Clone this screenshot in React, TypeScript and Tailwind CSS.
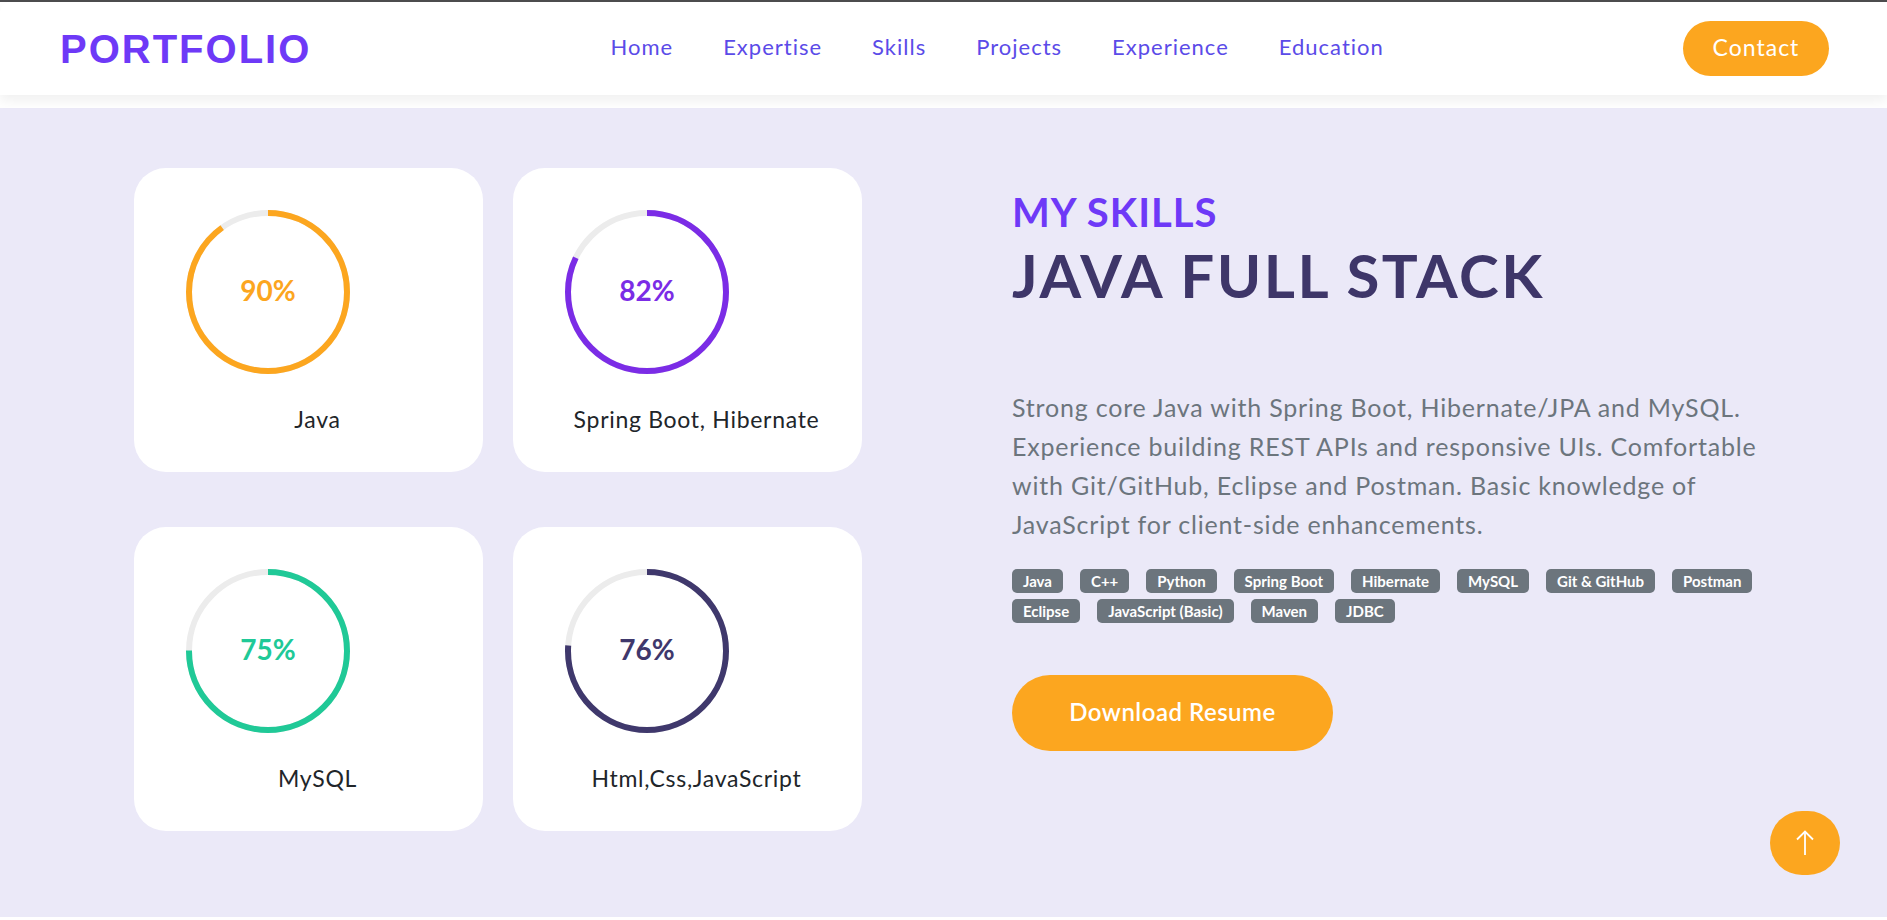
const skills = [
  { label: "Java", value: 90, color: "#fca61f" },
  { label: "Spring Boot, Hibernate", value: 82, color: "#7b2ce6" },
  { label: "MySQL", value: 75, color: "#20c997" },
  { label: "Html,Css,JavaScript", value: 76, color: "#3f386c" },
];

const tags = [
  "Java",
  "C++",
  "Python",
  "Spring Boot",
  "Hibernate",
  "MySQL",
  "Git & GitHub",
  "Postman",
  "Eclipse",
  "JavaScript (Basic)",
  "Maven",
  "JDBC",
];

const links = ["Home", "Expertise", "Skills", "Projects", "Experience", "Education"];

function Ring({ value, color }: { value: number; color: string }) {
  const r = 79;
  const c = 2 * Math.PI * r;
  return (
    <div className="relative h-[164px] w-[164px]">
      <svg width="164" height="164" viewBox="0 0 164 164" className="-rotate-90">
        <circle cx="82" cy="82" r={r} fill="none" stroke="#ececec" strokeWidth="6" />
        <circle
          cx="82"
          cy="82"
          r={r}
          fill="none"
          stroke={color}
          strokeWidth="6"
          strokeDasharray={c}
          strokeDashoffset={c * (1 - value / 100)}
        />
      </svg>
      <div className="absolute inset-0 flex items-center justify-center pb-[4px]">
        <span className="text-[28px] font-bold leading-none" style={{ color }}>
          {value}%
        </span>
      </div>
    </div>
  );
}

export default function App() {
  return (
    <div className="relative min-h-[920px] w-full bg-white font-['Lato',sans-serif]">
      <div className="h-[2px] bg-[#4d4d4f]" />
      <header className="relative z-10 flex h-[93px] items-center justify-between rounded-tl-[10px] bg-white pl-[60px] pr-[58px] shadow-[0_6px_12px_rgba(0,0,0,0.06)]">
        <div className="font-['Liberation_Sans',sans-serif] text-[40px] font-bold leading-none tracking-[2px] text-[#6e39f7]">
          PORTFOLIO
        </div>
        <nav className="flex items-center gap-[50px] pb-[4px]">
          {links.map((l) => (
            <a key={l} className="text-[22px] tracking-[1px] text-[#5b4be8]">
              {l}
            </a>
          ))}
        </nav>
        <button className="h-[55px] w-[146px] rounded-full bg-[#fca61f] pb-[2px] text-[23px] tracking-[1px] text-white">
          Contact
        </button>
      </header>

      <main className="mt-[13px] flex h-[809px] bg-[#ebe9f8] pl-[134px] pt-[60px]">
        <div className="grid grid-cols-[349px_349px] gap-x-[30px] gap-y-[55px] self-start">
          {skills.map((s) => (
            <div key={s.label} className="flex h-[304px] flex-col rounded-[32px] bg-white pt-[42px]">
              <div className="pl-[52px]">
                <Ring value={s.value} color={s.color} />
              </div>
              <div className="mt-[28px] pl-[18px] text-center text-[23px] tracking-[0.7px] text-[#212529]">
                {s.label}
              </div>
            </div>
          ))}
        </div>

        <div className="ml-[150px] w-[790px] pt-[20px]">
          <div className="text-[40px] font-bold leading-[48px] tracking-[1px] text-[#6e39f7]">MY SKILLS</div>
          <h1 className="mt-[4px] text-[60px] font-bold leading-[70px] tracking-[2.5px] text-[#3e3669]">
            JAVA FULL STACK
          </h1>
          <p className="mt-[78px] w-[764px] text-[25px] leading-[39px] tracking-[0.8px] text-[#6c757d]">
            Strong core Java with Spring Boot, Hibernate/JPA and MySQL. Experience building REST APIs and responsive
            UIs. Comfortable with Git/GitHub, Eclipse and Postman. Basic knowledge of JavaScript for client-side
            enhancements.
          </p>
          <div className="mt-[25px] flex w-[780px] flex-wrap gap-x-[17px] gap-y-[6px]">
            {tags.map((t) => (
              <span
                key={t}
                className="flex h-[24px] items-center rounded-[5px] bg-[#6c757d] px-[11px] text-[15px] font-bold text-white"
              >
                {t}
              </span>
            ))}
          </div>
          <button className="mt-[52px] h-[76px] w-[321px] rounded-full bg-[#fca61f] pb-[2px] text-[24px] font-semibold tracking-[0.5px] text-white">
            Download Resume
          </button>
        </div>
      </main>

      <button className="absolute bottom-[45px] right-[47px] flex h-[64px] w-[70px] items-center justify-center rounded-full bg-[#fca61f]">
        <svg width="18" height="26" viewBox="0 0 18 26" fill="none" stroke="white" strokeWidth="1.8">
          <path d="M9 25V1.5" />
          <path d="M1 9.5L9 1.5L17 9.5" />
        </svg>
      </button>
    </div>
  );
}
